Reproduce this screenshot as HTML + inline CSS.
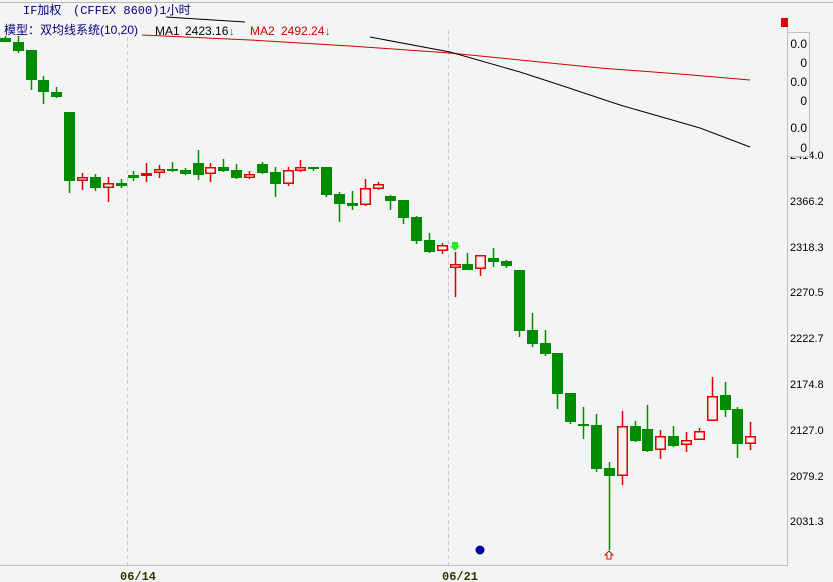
<!DOCTYPE html>
<html><head><meta charset="utf-8"><style>
body{margin:0;width:833px;height:582px;background:#f4f4f4;overflow:hidden;font-family:"Liberation Sans","Noto Sans CJK SC",sans-serif}
svg{position:absolute;left:0;top:0}
</style></head><body>
<svg id="s" width="833" height="582" xmlns="http://www.w3.org/2000/svg">
<rect width="833" height="582" fill="#f4f4f4"/>
<line x1="0" y1="2.5" x2="833" y2="2.5" stroke="#b8b8b8"/>
<line x1="787.5" y1="18" x2="787.5" y2="565" stroke="#c0c0c0"/>
<line x1="0" y1="565.5" x2="788" y2="565.5" stroke="#c0c0c0"/>
<line x1="127.5" y1="30" x2="127.5" y2="565" stroke="#c8c8c8" stroke-dasharray="4,3"/>
<line x1="448.5" y1="30" x2="448.5" y2="565" stroke="#c8c8c8" stroke-dasharray="4,3"/>
<polyline fill="none" stroke="#d00000" points="142,35 250,40 350,46 450,53 520,60 600,68 680,74 750,80"/>
<polyline fill="none" stroke="#000" points="370,37 450,52 520,72 560,85 620,105 700,128 750,147"/>
<line x1="166" y1="17" x2="245" y2="22" stroke="#000"/>
<text x="23" y="14" font-size="12" fill="#000080" font-family="Liberation Mono,'Noto Sans CJK SC',monospace">IF加权</text>
<text x="73" y="14" font-size="12" fill="#000080" font-family="Liberation Mono,'Noto Sans CJK SC',monospace">(CFFEX 8600)1小时</text>
<text x="4" y="34" font-size="12" fill="#000080">模型：双均线系统(10,20)</text>
<text x="155" y="35" font-size="12" fill="#000">MA1</text>
<text x="185" y="35" font-size="12" fill="#000">2423.16</text>
<text x="229" y="35" font-size="11" fill="#008800">↓</text>
<text x="250" y="35" font-size="12" fill="#d00000">MA2</text>
<text x="281" y="35" font-size="12" fill="#d00000">2492.24</text>
<text x="325" y="35" font-size="11" fill="#008800">↓</text>
<rect x="781" y="18" width="7" height="9" fill="#e00000"/>
<g font-size="11" fill="#000" font-family="Liberation Sans,sans-serif">
<text x="790" y="68">3.7</text><text x="790" y="114">1.8</text><text x="790" y="159">2414.0</text>
<text x="790" y="205">2366.2</text><text x="790" y="251">2318.3</text><text x="790" y="296">2270.5</text>
<text x="790" y="342">2222.7</text><text x="790" y="388">2174.8</text><text x="790" y="434">2127.0</text>
<text x="790" y="480">2079.2</text><text x="790" y="525">2031.3</text>
</g>
<rect x="787.5" y="32.5" width="22" height="124" fill="#f4f4f4" stroke="#c0c0c0"/>
<g font-size="12" fill="#000" text-anchor="end">
<text x="807" y="48">0.0</text><text x="807" y="67">0</text><text x="807" y="86">0.0</text>
<text x="807" y="105">0</text><text x="807" y="132">0.0</text><text x="807" y="152">0</text>
</g>
<g font-size="12" font-weight="bold" fill="#333300" font-family="Liberation Mono,monospace">
<text x="120" y="580">06/14</text><text x="442" y="580">06/21</text>
</g>
<circle cx="480" cy="550" r="4.5" fill="#000090"/>
<path d="M609,551 L613,555 L611,555 L611,559 L607,559 L607,555 L605,555 Z" fill="#fff" stroke="#e00000"/>
<path d="M452,242 h6 v4 h2 l-5,5 l-5,-5 h2 z" fill="#22ee22"/>
<g id="c"></g>
</svg>
<script>
var d=[
[0,38,42,36,42,'g'],[13,42,51,36,53,'g'],[26,50,80,50,90,'g'],[38,80,92,76,104,'g'],[51,92,97,87,98,'g'],
[64,112,181,112,193,'g'],[77,177,181,173,190,'r'],[90,177,188,174,191,'g'],[103,183,188,177,202,'r'],[116,183,186,179,188,'g'],
[128,175,178,171,181,'g'],[141,173,176,163,182,'r'],[154,169,173,165,178,'r'],[167,169,171,162,172,'g'],[180,170,174,168,175,'g'],
[193,163,175,150,180,'g'],[205,167,174,163,182,'r'],[218,167,171,159,172,'g'],[231,170,178,164,179,'g'],[244,174,178,171,179,'r'],
[257,164,173,162,174,'g'],[270,172,184,167,197,'g'],[283,170,184,167,186,'r'],[295,167,171,160,172,'r'],[308,167,169,167,171,'g'],
[321,167,195,167,197,'g'],[334,194,204,192,222,'g'],[347,203,206,191,210,'g'],[360,188,205,179,206,'r'],[373,184,189,182,190,'r'],
[385,196,201,195,210,'g'],[398,200,218,200,224,'g'],[411,217,241,216,244,'g'],[424,240,252,233,253,'g'],[437,245,251,243,254,'r'],
[450,264,268,252,297,'r'],[462,264,270,253,270,'g'],[475,255,269,255,276,'r'],[488,258,262,248,267,'g'],[501,261,266,260,268,'g'],
[514,270,331,270,337,'g'],[527,330,344,313,347,'g'],[540,343,354,330,356,'g'],[552,353,394,353,409,'g'],[565,393,422,393,424,'g'],
[578,424,426,407,439,'g'],[591,425,469,414,472,'g'],[604,468,476,462,550,'g'],[617,426,476,411,485,'r'],[630,426,441,421,442,'g'],
[642,429,451,405,452,'g'],[655,436,450,430,459,'r'],[668,436,446,426,447,'g'],[681,440,445,432,452,'r'],[694,431,440,428,440,'r'],
[707,396,421,377,421,'r'],[720,395,410,382,417,'g'],[732,409,444,407,458,'g'],[745,436,444,422,450,'r']];
var s='';
d.forEach(function(c){var x=c[0],g=c[5]=='g',col=g?'#008c00':'#e00000',cx=x+5.5;
s+='<line x1="'+cx+'" y1="'+c[3]+'" x2="'+cx+'" y2="'+c[4]+'" stroke="'+col+'" stroke-width="1.5"/>';
if(g)s+='<rect x="'+x+'" y="'+c[1]+'" width="11" height="'+Math.max(2,c[2]-c[1])+'" fill="'+col+'"/>';
else s+='<rect x="'+(x+0.75)+'" y="'+(c[1]+0.75)+'" width="9.5" height="'+Math.max(1,c[2]-c[1]-1.5)+'" fill="#f4f4f4" stroke="'+col+'" stroke-width="1.5"/>';});
document.getElementById('c').innerHTML=s;
</script>
</body></html>
